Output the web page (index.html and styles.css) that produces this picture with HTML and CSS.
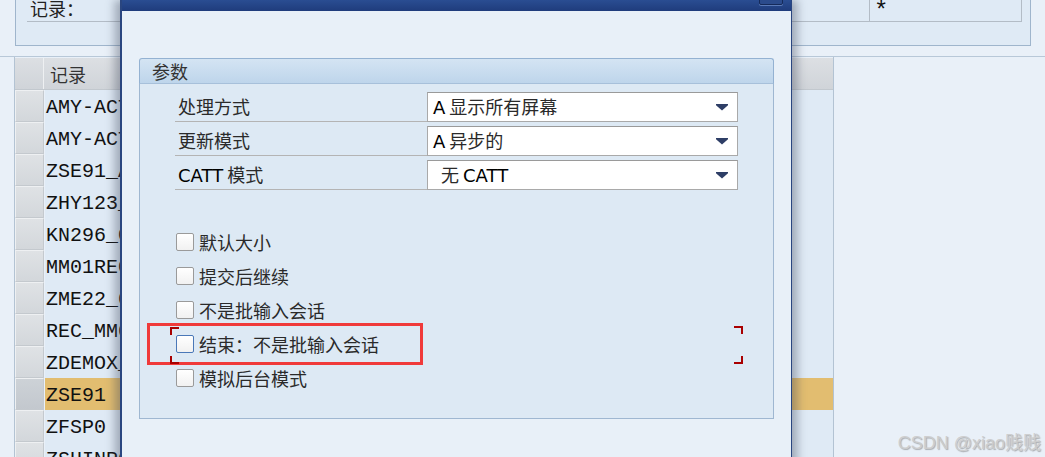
FILE: index.html
```html
<!DOCTYPE html>
<html lang="zh-CN">
<head>
<meta charset="utf-8">
<title>批输入会话</title>
<link rel="stylesheet" href="styles.css">
</head>
<body>
<div class="app">
  <div class="topgroup">
    <div class="toprow">
      <div class="toplabel">记录：</div>
      <div class="topfield">*</div>
    </div>
  </div>
  <div class="splitter"></div>
  <div class="table">
    <div class="trow thead">
      <div class="sel"></div>
      <div class="cell">记录</div>
    </div>
    <div class="trow"><div class="sel"></div><div class="cell mono">AMY-ACT01</div></div>
    <div class="trow"><div class="sel"></div><div class="cell mono">AMY-ACT02</div></div>
    <div class="trow"><div class="sel"></div><div class="cell mono">ZSE91_AB</div></div>
    <div class="trow"><div class="sel"></div><div class="cell mono">ZHY123_A</div></div>
    <div class="trow"><div class="sel"></div><div class="cell mono">KN296_CC</div></div>
    <div class="trow"><div class="sel"></div><div class="cell mono">MM01REC1</div></div>
    <div class="trow"><div class="sel"></div><div class="cell mono">ZME22_01</div></div>
    <div class="trow"><div class="sel"></div><div class="cell mono">REC_MM01</div></div>
    <div class="trow"><div class="sel"></div><div class="cell mono">ZDEMOX_1</div></div>
    <div class="trow active"><div class="sel"></div><div class="cell mono">ZSE91</div></div>
    <div class="trow"><div class="sel"></div><div class="cell mono">ZFSP0</div></div>
    <div class="trow"><div class="sel"></div><div class="cell mono">ZSHINP01</div></div>
  </div>
</div>

<div class="dialog">
  <div class="titlebar"><span class="tbtn"></span></div>
  <div class="dbody">
    <div class="group">
      <div class="ghead">参数</div>
      <div class="gbody">
        <div class="frow">
          <div class="flabel">处理方式</div>
          <div class="dropdown"><span class="dtext"><b class="lat">A</b> 显示所有屏幕</span><span class="arrow"></span></div>
        </div>
        <div class="frow">
          <div class="flabel">更新模式</div>
          <div class="dropdown"><span class="dtext"><b class="lat">A</b> 异步的</span><span class="arrow"></span></div>
        </div>
        <div class="frow">
          <div class="flabel"><span class="lat">CATT</span> 模式</div>
          <div class="dropdown"><span class="dtext indent">无 <span class="lat">CATT</span></span><span class="arrow"></span></div>
        </div>
        <div class="checks">
          <div class="crow"><span class="cb"></span><span class="ctext">默认大小</span></div>
          <div class="crow"><span class="cb"></span><span class="ctext">提交后继续</span></div>
          <div class="crow"><span class="cb"></span><span class="ctext">不是批输入会话</span></div>
          <div class="crow"><span class="cb focus"></span><span class="ctext">结束：不是批输入会话</span></div>
          <div class="crow"><span class="cb"></span><span class="ctext">模拟后台模式</span></div>
        </div>
      </div>
    </div>
  </div>
</div>

<div class="redbox"></div>
<div class="brk tl"></div>
<div class="brk bl"></div>
<div class="brk tr"></div>
<div class="brk br"></div>

<div class="watermark">CSDN @xiao贱贱</div>
</body>
</html>
```

FILE: styles.css
```css
html, body {
  margin: 0;
  padding: 0;
}
body {
  width: 1045px;
  height: 457px;
  overflow: hidden;
  background: #e9f0f8;
  font-family: "Noto Sans CJK SC", "Noto Sans", sans-serif;
  position: relative;
}

/* background application */
.app {
  display: flex;
  flex-direction: column;
}
.topgroup {
  margin-left: 15px;
  width: 1016px;
  height: 46px;
  border: 1px solid #9fb5cc;
  border-top: none;
  background: #dfeaf5;
  box-sizing: border-box;
  padding-left: 11px;
}
.toprow {
  display: flex;
  height: 22px;
  width: 995px;
}
.toplabel {
  flex: 1;
  border-bottom: 1px solid #b3bcc6;
  font-size: 18px;
  line-height: 16px;
  color: #222;
  padding-left: 3px;
  overflow: hidden;
}
.topfield {
  width: 153px;
  border: 1px solid #b3bcc6;
  border-top: none;
  box-sizing: border-box;
  font-family: "Liberation Mono", monospace;
  font-size: 24px;
  line-height: 24px;
  padding-left: 4px;
  color: #111;
  overflow: hidden;
}
.splitter {
  margin-top: 10px;
  height: 1px;
  background: #b8c8d8;
}
.table {
  margin-left: 14px;
  width: 818px;
  border-left: 1px solid #b3c3d3;
  border-right: 1px solid #b3c3d3;
  padding-top: 1px;
}
.trow {
  display: flex;
  height: 32px;
}
.thead {
  height: 32px;
  background: linear-gradient(#dcdfe3, #d0d4d9);
  border-bottom: 1px solid #c2c8ce;
  box-sizing: border-box;
}
.sel {
  width: 29px;
  box-sizing: border-box;
  border: 1px solid #c4c9ce;
  border-top-color: #eef0f2;
  border-left-color: #eef0f2;
  background: linear-gradient(#dfe2e5, #d3d7db);
  margin-right: 1px;
  flex: none;
}
.thead .sel {
  border: none;
  border-right: 1px solid #eef0f2;
  background: transparent;
}
.cell {
  flex: 1;
  background: #dfeaf5;
  font-size: 20px;
  line-height: 28px;
  padding: 4px 0 0 1px;
  color: #111;
  box-sizing: border-box;
}
.thead .cell {
  background: transparent;
  font-size: 18px;
  padding: 1px 0 0 5px;
  line-height: 30px;
  color: #333;
}
.mono {
  font-family: "Liberation Mono", monospace;
  font-size: 20px;
}
.active .cell {
  background: #e2bd70;
}
.active .sel {
  background: linear-gradient(#cdd2d7, #c3c8ce);
}

/* dialog window */
.dialog {
  position: absolute;
  left: 120px;
  top: 0;
  width: 672px;
  height: 470px;
  box-sizing: border-box;
  border-left: 2px solid #2a4680;
  border-right: 1px solid #2a4680;
  background: #e8f0f8;
  box-shadow: -6px 0 8px rgba(60, 70, 90, 0.35), 6px 0 8px rgba(60, 70, 90, 0.35);
}
.titlebar {
  height: 11px;
  background: linear-gradient(#2a4d92, #1f3c7c);
  position: relative;
}
.tbtn {
  position: absolute;
  left: 637px;
  top: -3px;
  width: 24px;
  height: 8px;
  border: 1px solid #152a5a;
  border-radius: 2px;
  box-sizing: border-box;
  background: #2b4b8c;
  box-shadow: 0 1px 0 #5a7ab8;
}
.dbody {
  padding: 47px 0 0 17px;
}
.group {
  width: 635px;
}
.ghead {
  height: 26px;
  box-sizing: border-box;
  border: 1px solid #94b2d2;
  border-bottom-color: #a7c0da;
  border-radius: 3px 3px 0 0;
  background: linear-gradient(#d4e4f3, #bed5eb);
  font-size: 18px;
  line-height: 24px;
  padding-left: 12px;
  color: #333;
}
.gbody {
  height: 335px;
  box-sizing: border-box;
  border: 1px solid #9fb7d1;
  border-top: none;
  background: #dde9f4;
  padding: 8px 0 0 35px;
}
.frow {
  display: flex;
  height: 30px;
  margin-bottom: 4px;
}
.flabel {
  width: 252px;
  box-sizing: border-box;
  border-bottom: 1px solid #b4b4b4;
  font-size: 18px;
  line-height: 28px;
  padding-left: 3px;
  color: #2a2a2a;
}
.lat {
  font-family: "DejaVu Sans", "Liberation Sans", sans-serif;
  font-weight: normal;
  font-size: 18px;
  color: #000;
}
.dropdown {
  width: 311px;
  box-sizing: border-box;
  border: 1px solid #a9a9a9;
  border-top-color: #9a9a9a;
  background: #fff;
  display: flex;
  align-items: center;
  justify-content: space-between;
  padding: 0 9px 0 5px;
}
.dtext {
  font-size: 18px;
  line-height: 26px;
  color: #2a2a2a;
  white-space: pre;
}
.dtext.indent {
  padding-left: 8px;
}
.arrow {
  width: 12px;
  height: 7px;
  background: #2e3e66;
  clip-path: polygon(0 0, 100% 0, 100% 25%, 50% 100%, 0 25%);
}
.checks {
  margin-top: 43px;
  display: flex;
  flex-direction: column;
  gap: 16px;
}
.crow {
  display: flex;
  align-items: center;
  height: 18px;
  padding-left: 1px;
}
.cb {
  width: 18px;
  height: 18px;
  box-sizing: border-box;
  border: 1px solid #9a9a9a;
  border-radius: 2px;
  background: linear-gradient(#ffffff, #f1f1f1);
  margin-right: 5px;
  flex: none;
}
.cb.focus {
  border-color: #4a78b8;
}
.ctext {
  font-size: 18px;
  line-height: 18px;
  color: #2a2a2a;
  white-space: nowrap;
}

/* annotations */
.redbox {
  position: absolute;
  left: 147px;
  top: 323px;
  width: 276px;
  height: 42px;
  box-sizing: border-box;
  border: 3px solid #f03a3a;
}
.brk {
  position: absolute;
  width: 9px;
  height: 8px;
  box-sizing: border-box;
  border: 0 solid #a90000;
}
.brk.tl { left: 170px; top: 327px; border-left-width: 2px; border-top-width: 2px; }
.brk.bl { left: 170px; top: 356px; border-left-width: 2px; border-bottom-width: 2px; }
.brk.tr { left: 734px; top: 326px; border-right-width: 2px; border-top-width: 2px; }
.brk.br { left: 734px; top: 356px; border-right-width: 2px; border-bottom-width: 2px; }

.watermark {
  position: absolute;
  right: 4px;
  top: 428px;
  font-family: "Liberation Sans", Arial, "Noto Sans CJK SC", sans-serif;
  font-size: 18px;
  color: rgba(205, 205, 205, 0.95);
  text-shadow: 1px 1px 1px rgba(90, 90, 90, 0.45);
}
```
